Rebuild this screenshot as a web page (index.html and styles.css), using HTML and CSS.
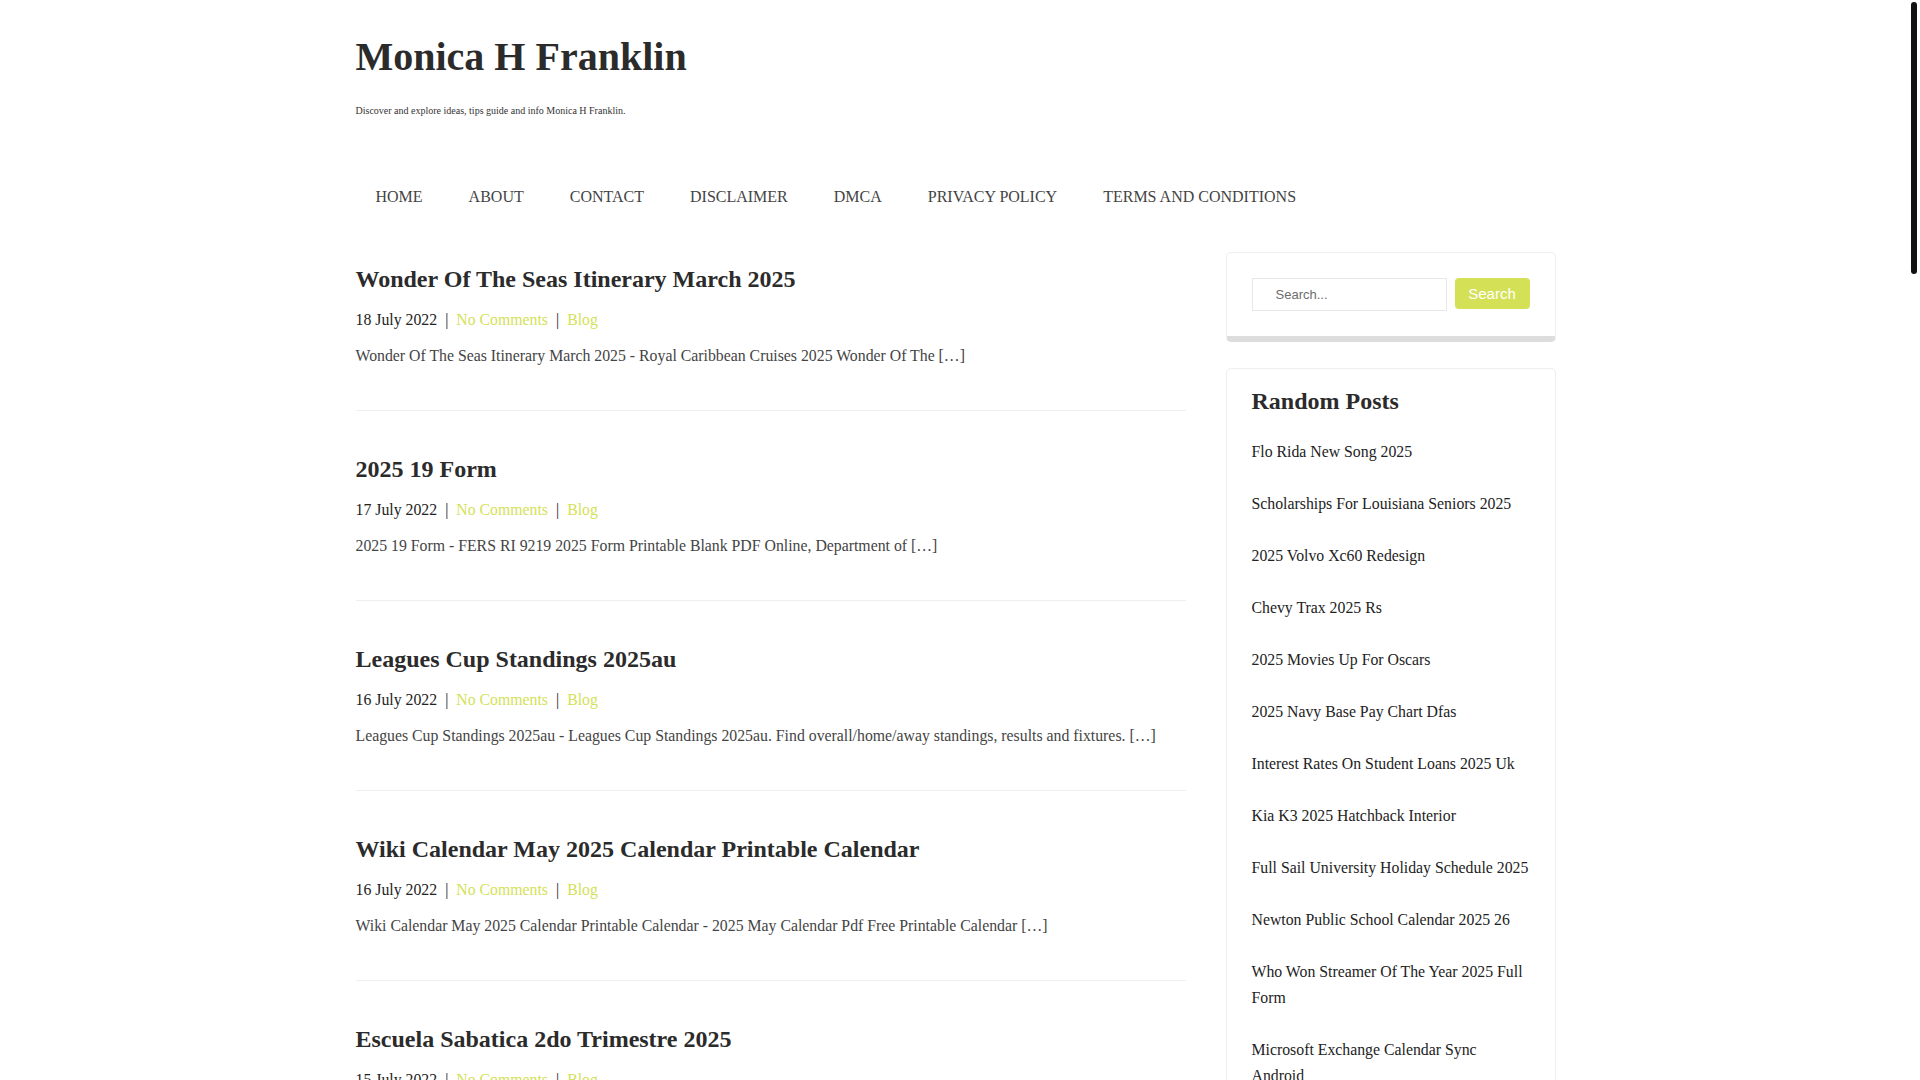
FILE: index.html
```html
<!DOCTYPE html>
<html lang="en">

<head>
  <meta charset="UTF-8">
  <meta name="viewport" content="width=device-width, initial-scale=1.0">
  <title>Monica H Franklin</title>
  <link rel="stylesheet" href="styles.css">
</head>

<body>
  <div class="scroll-thumb"></div>

  <header class="site-header">
    <div class="container">
      <h1 class="site-title"><a href="#">Monica H Franklin</a></h1>
      <p class="site-desc">Discover and explore ideas, tips guide and info Monica H Franklin.</p>
      <nav class="menu">
        <ul>
          <li><a href="#">HOME</a></li>
          <li><a href="#">ABOUT</a></li>
          <li><a href="#">CONTACT</a></li>
          <li><a href="#">DISCLAIMER</a></li>
          <li><a href="#">DMCA</a></li>
          <li><a href="#">PRIVACY POLICY</a></li>
          <li><a href="#">TERMS AND CONDITIONS</a></li>
        </ul>
      </nav>
    </div>
  </header>

  <div class="container site-content">
    <main class="posts">
      <article class="post">
        <h2 class="post-title"><a href="#">Wonder Of The Seas Itinerary March 2025</a></h2>
        <div class="post-meta">18 July 2022<span class="sep">|</span><a href="#">No Comments</a><span class="sep">|</span><a href="#">Blog</a></div>
        <p class="excerpt">Wonder Of The Seas Itinerary March 2025 - Royal Caribbean Cruises 2025 Wonder Of The […]</p>
      </article>
      <article class="post">
        <h2 class="post-title"><a href="#">2025 19 Form</a></h2>
        <div class="post-meta">17 July 2022<span class="sep">|</span><a href="#">No Comments</a><span class="sep">|</span><a href="#">Blog</a></div>
        <p class="excerpt">2025 19 Form - FERS RI 9219 2025 Form Printable Blank PDF Online, Department of […]</p>
      </article>
      <article class="post">
        <h2 class="post-title"><a href="#">Leagues Cup Standings 2025au</a></h2>
        <div class="post-meta">16 July 2022<span class="sep">|</span><a href="#">No Comments</a><span class="sep">|</span><a href="#">Blog</a></div>
        <p class="excerpt">Leagues Cup Standings 2025au - Leagues Cup Standings 2025au. Find overall/home/away standings, results and fixtures. […]</p>
      </article>
      <article class="post">
        <h2 class="post-title"><a href="#">Wiki Calendar May 2025 Calendar Printable Calendar</a></h2>
        <div class="post-meta">16 July 2022<span class="sep">|</span><a href="#">No Comments</a><span class="sep">|</span><a href="#">Blog</a></div>
        <p class="excerpt">Wiki Calendar May 2025 Calendar Printable Calendar - 2025 May Calendar Pdf Free Printable Calendar […]</p>
      </article>
      <article class="post">
        <h2 class="post-title"><a href="#">Escuela Sabatica 2do Trimestre 2025</a></h2>
        <div class="post-meta">15 July 2022<span class="sep">|</span><a href="#">No Comments</a><span class="sep">|</span><a href="#">Blog</a></div>
        <p class="excerpt">Escuela Sabatica 2do Trimestre 2025 - Lecciones de Escuela Sabatica para el segundo trimestre […]</p>
      </article>
      <article class="post">
        <h2 class="post-title"><a href="#">Flo Rida New Song 2025</a></h2>
        <div class="post-meta">15 July 2022<span class="sep">|</span><a href="#">No Comments</a><span class="sep">|</span><a href="#">Blog</a></div>
        <p class="excerpt">Flo Rida New Song 2025 - Listen to the latest songs and albums from Flo Rida […]</p>
      </article>
      <article class="post">
        <h2 class="post-title"><a href="#">2025 Volvo Xc60 Redesign</a></h2>
        <div class="post-meta">14 July 2022<span class="sep">|</span><a href="#">No Comments</a><span class="sep">|</span><a href="#">Blog</a></div>
        <p class="excerpt">2025 Volvo Xc60 Redesign - Everything we know about the next Volvo XC60 […]</p>
      </article>
      <article class="post">
        <h2 class="post-title"><a href="#">Chevy Trax 2025 Rs</a></h2>
        <div class="post-meta">14 July 2022<span class="sep">|</span><a href="#">No Comments</a><span class="sep">|</span><a href="#">Blog</a></div>
        <p class="excerpt">Chevy Trax 2025 Rs - Price, specs and features of the Chevrolet Trax RS […]</p>
      </article>
      <article class="post">
        <h2 class="post-title"><a href="#">Kia K3 2025 Hatchback Interior</a></h2>
        <div class="post-meta">13 July 2022<span class="sep">|</span><a href="#">No Comments</a><span class="sep">|</span><a href="#">Blog</a></div>
        <p class="excerpt">Kia K3 2025 Hatchback Interior - Photos and details of the new Kia K3 hatchback […]</p>
      </article>
      <article class="post">
        <h2 class="post-title"><a href="#">2025 Navy Base Pay Chart Dfas</a></h2>
        <div class="post-meta">13 July 2022<span class="sep">|</span><a href="#">No Comments</a><span class="sep">|</span><a href="#">Blog</a></div>
        <p class="excerpt">2025 Navy Base Pay Chart Dfas - Military pay tables for all ranks and years of service […]</p>
      </article>
      <div class="pagination">
        <span class="current">1</span><a href="#">2</a><a href="#">3</a><span>…</span><a href="#">Next</a>
      </div>
    </main>

    <aside class="sidebar">
      <section class="widget widget-search">
        <form class="search-form">
          <input type="search" placeholder="Search...">
          <button type="button">Search</button>
        </form>
      </section>
      <section class="widget">
        <h3 class="widget-title">Random Posts</h3>
        <ul class="widget-list">
          <li><a href="#">Flo Rida New Song 2025</a></li>
          <li><a href="#">Scholarships For Louisiana Seniors 2025</a></li>
          <li><a href="#">2025 Volvo Xc60 Redesign</a></li>
          <li><a href="#">Chevy Trax 2025 Rs</a></li>
          <li><a href="#">2025 Movies Up For Oscars</a></li>
          <li><a href="#">2025 Navy Base Pay Chart Dfas</a></li>
          <li><a href="#">Interest Rates On Student Loans 2025 Uk</a></li>
          <li><a href="#">Kia K3 2025 Hatchback Interior</a></li>
          <li><a href="#">Full Sail University Holiday Schedule 2025</a></li>
          <li><a href="#">Newton Public School Calendar 2025 26</a></li>
          <li><a href="#">Who Won Streamer Of The Year 2025 Full Form</a></li>
          <li><a href="#">Microsoft Exchange Calendar Sync Android</a></li>
          <li><a href="#">Wonder Of The Seas Itinerary March 2025</a></li>
          <li><a href="#">Leagues Cup Standings 2025au</a></li>
          <li><a href="#">Escuela Sabatica 2do Trimestre 2025</a></li>
        </ul>
      </section>
      <section class="widget">
        <h3 class="widget-title">Recent Posts</h3>
        <ul class="widget-list">
          <li><a href="#">Wonder Of The Seas Itinerary March 2025</a></li>
          <li><a href="#">2025 19 Form</a></li>
          <li><a href="#">Leagues Cup Standings 2025au</a></li>
          <li><a href="#">Wiki Calendar May 2025 Calendar Printable Calendar</a></li>
          <li><a href="#">Escuela Sabatica 2do Trimestre 2025</a></li>
        </ul>
      </section>
    </aside>
  </div>

  <footer class="site-footer">
    <div class="container">Copyright © 2022 Monica H Franklin</div>
  </footer>
</body>

</html>
```

FILE: styles.css
```css
body {
  margin: 0;
  padding-right: 9px;
  font-family: "Liberation Serif", "Times New Roman", serif;
  font-size: 16px;
  color: #333;
  background: #fff;
}

/* thin dark scrollbar thumb drawn over the right edge */
.scroll-thumb {
  position: fixed;
  top: 2px;
  right: 3px;
  width: 6px;
  height: 272px;
  border-radius: 3px;
  background: #111;
}

a {
  color: inherit;
  text-decoration: none;
}

.container {
  width: 1200px;
  margin: 0 auto;
}

/* header */
.site-header {
  padding-top: 33px;
}

.site-title {
  margin: 0;
  font-size: 40px;
  line-height: 48px;
  color: #2b2b2b;
}

.site-desc {
  margin: 22px 0 0;
  font-size: 10px;
  line-height: 15px;
  color: #333;
}

.menu ul {
  list-style: none;
  margin: 67px 0 0;
  padding: 0;
  display: flex;
}

.menu li + li {
  margin-left: 6px;
}

.menu a {
  display: block;
  padding: 0 20px;
  line-height: 24px;
  color: #444;
}

/* content */
.site-content {
  display: grid;
  grid-template-columns: 830px 330px;
  gap: 40px;
  margin-top: 43px;
  align-items: start;
}

.post {
  padding: 12px 0 42px;
  margin-bottom: 31px;
  border-bottom: 1px solid #eee;
}

.post-title {
  margin: 0 0 13px;
  font-size: 24px;
  line-height: 31px;
  color: #2b2b2b;
}

.post-meta {
  font-size: 15.8px;
  line-height: 24px;
  margin-bottom: 12px;
  color: #222;
}

.post-meta a {
  color: #d4e157;
}

.post-meta .sep {
  margin: 0 8px;
  color: #222;
}

.excerpt {
  margin: 0;
  font-size: 15.8px;
  line-height: 24px;
  color: #444;
}

.pagination {
  display: flex;
  gap: 8px;
  margin-bottom: 60px;
}

.pagination a,
.pagination span {
  padding: 6px 12px;
  border: 1px solid #eee;
  border-radius: 4px;
}

.pagination .current {
  background: #d4e157;
  border-color: #d4e157;
  color: #fff;
}

/* sidebar */
.widget {
  border: 1px solid #eee;
  border-bottom: 6px solid #ddd;
  border-radius: 5px;
  padding: 20px 25px 24px;
  margin-bottom: 26px;
}

.widget-search {
  padding: 25px;
}

.search-form {
  display: flex;
  align-items: flex-start;
  gap: 8px;
}

.search-form input {
  box-sizing: border-box;
  width: 195px;
  height: 33px;
  border: 1px solid #e8e8e8;
  padding: 0 0 0 23px;
  font-family: "Liberation Sans", Arial, sans-serif;
  font-size: 13px;
  color: #555;
  outline: none;
}

.search-form input::placeholder {
  color: #6d6d6d;
}

.search-form button {
  width: 75px;
  height: 31px;
  border: none;
  border-radius: 4px;
  background: #d4e157;
  color: #fff;
  font-family: "Liberation Sans", Arial, sans-serif;
  font-size: 15px;
  padding: 0;
}

.widget-title {
  margin: 0 0 26px;
  font-size: 24px;
  line-height: 24px;
  color: #2b2b2b;
}

.widget-list {
  list-style: none;
  margin: 0;
  padding: 0;
}

.widget-list li {
  font-size: 15.8px;
  line-height: 26px;
  margin-bottom: 26px;
  color: #222;
}

.site-footer {
  padding: 30px 0;
  border-top: 1px solid #eee;
  font-size: 14px;
  color: #666;
}
```
